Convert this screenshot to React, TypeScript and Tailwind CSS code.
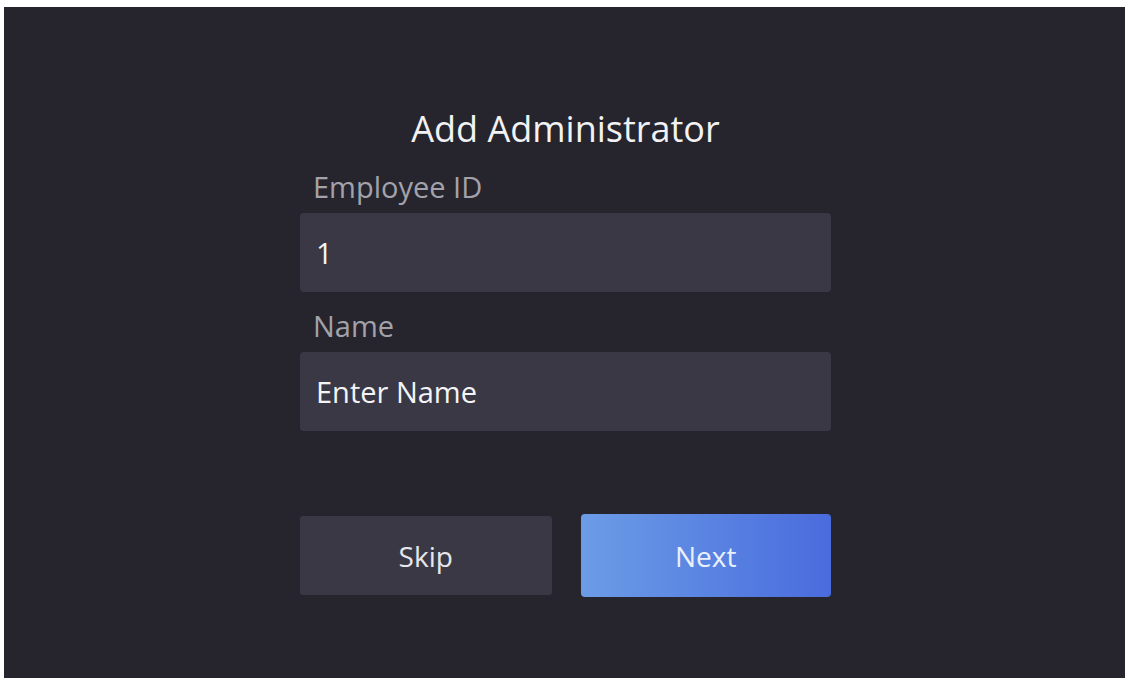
import React, { useState } from 'react';

const font = { fontFamily: '"Open Sans", "Noto Sans", sans-serif' };

function Field({ label, value, placeholder, onChange }: {
  label: string;
  value: string;
  placeholder?: string;
  onChange: (v: string) => void;
}) {
  return (
    <div className="flex flex-col">
      <label className="pl-[13px] text-[29px] leading-[32px] text-[#a3a2ab]">{label}</label>
      <div className="mt-[10px] h-[79px] rounded-[4px] bg-[#3a3845] flex items-center px-[16px]">
        <input
          value={value}
          placeholder={placeholder}
          onChange={(e) => onChange(e.target.value)}
          className="w-full bg-transparent outline-none text-[29px] leading-[34px] text-[#f4f4f6] placeholder:text-[#f4f4f6]"
          style={font}
        />
      </div>
    </div>
  );
}

export default function App() {
  const [employeeId, setEmployeeId] = useState('1');
  const [name, setName] = useState('');

  return (
    <div className="w-[1126px] h-[678px] bg-white pt-[7px] pl-[4px] pr-[1px] overflow-hidden" style={font}>
      <div className="h-full bg-[#26252e] pl-[296px] pt-[102px]">
        <div className="w-[531px] flex flex-col">
          <h1 className="text-center text-[36px] leading-[40px] text-[#f2f2f4] font-normal">Add Administrator</h1>

          <div className="mt-[22px]">
            <Field label="Employee ID" value={employeeId} onChange={setEmployeeId} />
          </div>

          <div className="mt-[18px]">
            <Field label="Name" value={name} placeholder="Enter Name" onChange={setName} />
          </div>

          {/* action buttons */}
          <div className="mt-[83px] flex items-center gap-[29px]">
            <button className="w-[252px] h-[79px] rounded-[3px] bg-[#3a3845] text-[28px] text-[#e6e6ea]">
              Skip
            </button>
            <button className="w-[251px] h-[83px] rounded-[4px] bg-gradient-to-r from-[#6c9ce6] to-[#4a6bdd] text-[28px] text-[#eaf0fc]">
              Next
            </button>
          </div>
        </div>
      </div>
    </div>
  );
}
